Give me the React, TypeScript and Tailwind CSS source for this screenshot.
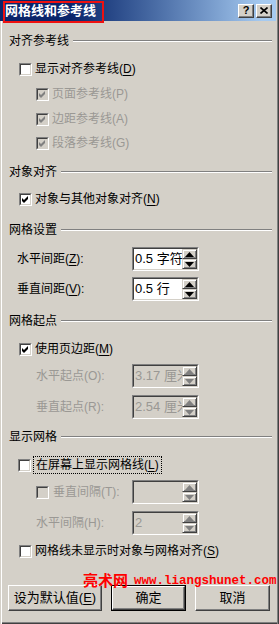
import React from "react";

const DIS = "text-[#9a9894]";

function Acc({ text, k, tail = "" }: { text: string; k: string; tail?: string }) {
  return (
    <span className="whitespace-nowrap">
      {text}(<span className="underline underline-offset-[2px]">{k}</span>){tail}
    </span>
  );
}

function Check({ checked = false, disabled = false }: { checked?: boolean; disabled?: boolean }) {
  return (
    <span
      className={`relative inline-block h-[13px] w-[13px] shrink-0 border border-t-[#808080] border-l-[#808080] border-r-white border-b-white ${
        disabled ? "bg-[#d4d0c8]" : "bg-white"
      }`}
    >
      <span className="absolute inset-0 border border-t-[#404040] border-l-[#404040] border-r-[#d4d0c8] border-b-[#d4d0c8]" />
      {checked && (
        <svg className="absolute left-0 top-0" width="11" height="11" viewBox="0 0 11 11">
          <polygon points="2,4 4,6 8,2 8,5 4,9 2,7" fill={disabled ? "#808080" : "#000"} />
        </svg>
      )}
    </span>
  );
}

function Header({ text }: { text: string }) {
  return (
    <div className="flex h-[14px] items-center pl-[9px] pr-[7px]">
      <span className="whitespace-nowrap text-[12px] leading-none">{text}</span>
      <span className="ml-[4px] h-[2px] flex-1 border-t border-b border-t-[#808080] border-b-white" />
    </div>
  );
}

function SpinBtn({ up, disabled }: { up?: boolean; disabled?: boolean }) {
  return (
    <div className="flex flex-1 items-center justify-center border border-t-[#d4d0c8] border-l-[#d4d0c8] border-r-[#404040] border-b-[#404040] bg-[#d4d0c8] shadow-[inset_1px_1px_#fff,inset_-1px_-1px_#808080]">
      <svg width="9" height="5" viewBox="0 0 9 5">
        <polygon
          points={up ? "4.5,0 9,5 0,5" : "0,0 9,0 4.5,5"}
          fill={disabled ? "#808080" : "#000"}
        />
      </svg>
    </div>
  );
}

function Spin({ value, disabled = false }: { value: string; disabled?: boolean }) {
  return (
    <div className="flex h-[24px] w-[67px] shrink-0 border border-t-[#808080] border-l-[#808080] border-r-white border-b-white">
      <div
        className={`relative flex flex-1 border border-t-[#404040] border-l-[#404040] border-r-[#d4d0c8] border-b-[#d4d0c8] ${
          disabled ? "bg-[#d4d0c8]" : "bg-white"
        }`}
      >
        <span
          className={`flex-1 whitespace-nowrap pl-[1px] text-[13px] leading-[20px] ${
            disabled ? DIS : "text-black"
          }`}
        >
          {value}
        </span>
        {/* spin buttons sit over the end of the value, as in the original */}
        <div className="absolute right-0 top-0 bottom-0 flex w-[15px] flex-col">
          <SpinBtn up disabled={disabled} />
          <SpinBtn disabled={disabled} />
        </div>
      </div>
    </div>
  );
}

function CheckRow({
  children,
  checked,
  disabled,
  indent,
  className = "",
}: {
  children: React.ReactNode;
  checked?: boolean;
  disabled?: boolean;
  indent: number;
  className?: string;
}) {
  return (
    <div
      className={`flex h-[16px] items-center gap-[3px] ${indent === 1 ? "pl-[19px]" : "pl-[36px]"} ${className}`}
    >
      <Check checked={checked} disabled={disabled} />
      <span className={`text-[12px] leading-none ${disabled ? DIS : "text-black"}`}>{children}</span>
    </div>
  );
}

function SpinRow({
  label,
  value,
  disabled,
  indent,
  className = "",
}: {
  label: React.ReactNode;
  value: string;
  disabled?: boolean;
  indent: number;
  className?: string;
}) {
  return (
    <div className={`flex items-center ${className}`}>
      <span
        className={`whitespace-nowrap text-[12px] leading-none ${
          indent === 1 ? "w-[132px] pl-[17px]" : "w-[132px] pl-[36px]"
        } ${disabled ? DIS : "text-black"}`}
      >
        {label}
      </span>
      <Spin value={value} disabled={disabled} />
    </div>
  );
}

function Btn({ children, def, w }: { children: React.ReactNode; def?: boolean; w: string }) {
  return (
    <div className={`h-[26px] ${w} ${def ? "border border-black" : ""}`}>
      <div className="flex h-full w-full items-center justify-center border border-t-white border-l-white border-r-[#404040] border-b-[#404040] bg-[#d4d0c8] text-[13px] shadow-[inset_-1px_-1px_#808080]">
        {children}
      </div>
    </div>
  );
}

function TitleBtn({ children }: { children: React.ReactNode }) {
  return (
    <div className="flex h-[14px] w-[16px] items-center justify-center border border-t-white border-l-white border-r-[#404040] border-b-[#404040] bg-[#d4d0c8] text-[11px] font-bold leading-none text-black shadow-[inset_-1px_-1px_#808080]">
      {children}
    </div>
  );
}

export default function App() {
  return (
    <div className="relative flex h-[624px] w-[279px] flex-col overflow-hidden bg-[#d4d0c8] font-['Liberation_Sans','Noto_Sans_CJK_SC',sans-serif] text-black shadow-[inset_1px_0_#d4d0c8,inset_2px_0_#fff,inset_-1px_0_#404040,inset_-2px_0_#808080,inset_0_-1px_#404040,inset_0_-2px_#808080]">
      {/* title bar */}
      <div className="mr-[3px] flex h-[21px] shrink-0 items-center bg-linear-to-r from-[#0a246a] from-25% to-[#a6caf0] to-95% pl-[5px] pr-[4px]">
        <span className="flex-1 text-[13px] font-bold leading-none text-white">网格线和参考线</span>
        <div className="flex gap-[2px]">
          <TitleBtn>?</TitleBtn>
          <TitleBtn>
            <svg width="8" height="7" viewBox="0 0 8 7">
              <path d="M0.5 0.5 L7.5 6.5 M7.5 0.5 L0.5 6.5" stroke="#000" strokeWidth="1.6" />
            </svg>
          </TitleBtn>
        </div>
      </div>
      <div className="pointer-events-none absolute left-[3px] top-[1px] h-[22px] w-[101px] border-2 border-[#ee1111]" />

      <div className="mt-[13px]">
        <Header text="对齐参考线" />
      </div>
      <CheckRow indent={1} className="mt-[13px]">
        <Acc text="显示对齐参考线" k="D" />
      </CheckRow>
      <CheckRow indent={2} checked disabled className="mt-[9px]">
        页面参考线(P)
      </CheckRow>
      <CheckRow indent={2} checked disabled className="mt-[9px]">
        边距参考线(A)
      </CheckRow>
      <CheckRow indent={2} checked disabled className="mt-[8px]">
        段落参考线(G)
      </CheckRow>

      <div className="mt-[14px]">
        <Header text="对象对齐" />
      </div>
      <CheckRow indent={1} checked className="mt-[12px]">
        <Acc text="对象与其他对象对齐" k="N" />
      </CheckRow>

      <div className="mt-[16px]">
        <Header text="网格设置" />
      </div>
      <SpinRow indent={1} className="mt-[10px]" label={<Acc text="水平间距" k="Z" tail=":" />} value="0.5 字符" />
      <SpinRow indent={1} className="mt-[6px]" label={<Acc text="垂直间距" k="V" tail=":" />} value="0.5 行" />

      <div className="mt-[13px]">
        <Header text="网格起点" />
      </div>
      <CheckRow indent={1} checked className="mt-[13px]">
        <Acc text="使用页边距" k="M" />
      </CheckRow>
      <SpinRow indent={2} disabled className="mt-[7px]" label="水平起点(O):" value="3.17 厘米" />
      <SpinRow indent={2} disabled className="mt-[7px]" label="垂直起点(R):" value="2.54 厘米" />

      <div className="mt-[11px]">
        <Header text="显示网格" />
      </div>
      <div className="mt-[13px] flex h-[16px] items-center gap-[3px] pl-[18px]">
        <Check />
        <span className="flex h-[16px] items-center px-[2px] text-[12px] leading-none outline-1 outline-dotted outline-black">
          <Acc text="在屏幕上显示网格线" k="L" />
        </span>
      </div>
      <div className="mt-[7px] flex items-center">
        <div className="flex w-[132px] items-center gap-[4px] pl-[36px]">
          <Check disabled />
          <span className={`whitespace-nowrap text-[12px] leading-none ${DIS}`}>垂直间隔(T):</span>
        </div>
        <Spin value="" disabled />
      </div>
      <SpinRow indent={2} disabled className="mt-[7px]" label="水平间隔(H):" value="2" />
      <CheckRow indent={1} className="mt-[8px]">
        <Acc text="网格线未显示时对象与网格对齐" k="S" />
      </CheckRow>

      <div className="mt-[26px] flex gap-[9px] pl-[8px]">
        <Btn w="w-[94px]">
          <Acc text="设为默认值" k="E" />
        </Btn>
        <Btn w="w-[75px]" def>
          确定
        </Btn>
        <Btn w="w-[75px]">取消</Btn>
      </div>

      {/* watermark */}
      <span className="pointer-events-none absolute left-[83px] top-[573px] text-[15px] font-bold leading-none text-[#ff0000]">
        亮术网
      </span>
      <span className="pointer-events-none absolute left-[134px] top-[575px] font-['Liberation_Mono',monospace] text-[12.5px] font-bold leading-none text-[#ff0000]">
        www.liangshunet.com
      </span>
    </div>
  );
}
